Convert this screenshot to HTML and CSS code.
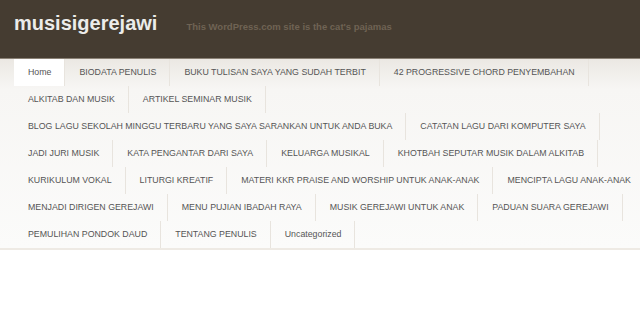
FILE: index.html
```html
<!DOCTYPE html>
<html lang="en">

<head>
    <meta charset="UTF-8">
    <meta name="viewport" content="width=device-width, initial-scale=1.0">
    <title>musisigerejawi</title>
    <link rel="stylesheet" href="styles.css">
</head>

<body>
    <header class="site-header">
        <div class="branding">
            <h1 class="site-title">musisigerejawi</h1>
            <p class="site-description">This WordPress.com site is the cat's pajamas</p>
        </div>
    </header>

    <nav class="main-nav">
        <ul class="menu">
            <li class="menu-item current">Home</li>
            <li class="menu-item">BIODATA PENULIS</li>
            <li class="menu-item">BUKU TULISAN SAYA YANG SUDAH TERBIT</li>
            <li class="menu-item">42 PROGRESSIVE CHORD PENYEMBAHAN</li>
            <li class="menu-item">ALKITAB DAN MUSIK</li>
            <li class="menu-item">ARTIKEL SEMINAR MUSIK</li>
            <li class="menu-item">BLOG LAGU SEKOLAH MINGGU TERBARU YANG SAYA SARANKAN UNTUK ANDA BUKA</li>
            <li class="menu-item">CATATAN LAGU DARI KOMPUTER SAYA</li>
            <li class="menu-item">JADI JURI MUSIK</li>
            <li class="menu-item">KATA PENGANTAR DARI SAYA</li>
            <li class="menu-item">KELUARGA MUSIKAL</li>
            <li class="menu-item">KHOTBAH SEPUTAR MUSIK DALAM ALKITAB</li>
            <li class="menu-item">KURIKULUM VOKAL</li>
            <li class="menu-item">LITURGI KREATIF</li>
            <li class="menu-item">MATERI KKR PRAISE AND WORSHIP UNTUK ANAK-ANAK</li>
            <li class="menu-item">MENCIPTA LAGU ANAK-ANAK</li>
            <li class="menu-item">MENJADI DIRIGEN GEREJAWI</li>
            <li class="menu-item">MENU PUJIAN IBADAH RAYA</li>
            <li class="menu-item">MUSIK GEREJAWI UNTUK ANAK</li>
            <li class="menu-item">PADUAN SUARA GEREJAWI</li>
            <li class="menu-item">PEMULIHAN PONDOK DAUD</li>
            <li class="menu-item">TENTANG PENULIS</li>
            <li class="menu-item">Uncategorized</li>
        </ul>
    </nav>
</body>

</html>
```

FILE: styles.css
```css
* {
    margin: 0;
    padding: 0;
    box-sizing: border-box;
}

html,
body {
    overflow-x: hidden;
}

body {
    font-family: "Liberation Sans", Arial, sans-serif;
    background: #fff;
}

.site-header {
    background-color: #453c31;
    height: 59px;
    border-bottom: 1px solid #8a8175;
}

.branding {
    display: flex;
    align-items: baseline;
    padding: 11px 0 0 14px;
}

.site-title {
    font-size: 20px;
    font-weight: bold;
    color: #ececea;
    line-height: 24px;
}

.site-description {
    font-size: 9.5px;
    font-weight: bold;
    color: #6f6354;
    margin-left: 29px;
}

.main-nav {
    background: linear-gradient(#ebe8e3, #f7f6f4 30px, #fbfbfa);
    border-bottom: 2px solid #eeeae4;
}

.menu {
    list-style: none;
    display: flex;
    flex-wrap: wrap;
    width: 640px;
    margin-left: 14px;
}

.menu-item {
    font-size: 8.8px;
    color: #555;
    height: 27px;
    line-height: 27px;
    padding: 0 13px 0 14px;
    border-right: 1px solid #e8e4de;
    white-space: nowrap;
}

.menu-item.current {
    background: #fff;
}
```
